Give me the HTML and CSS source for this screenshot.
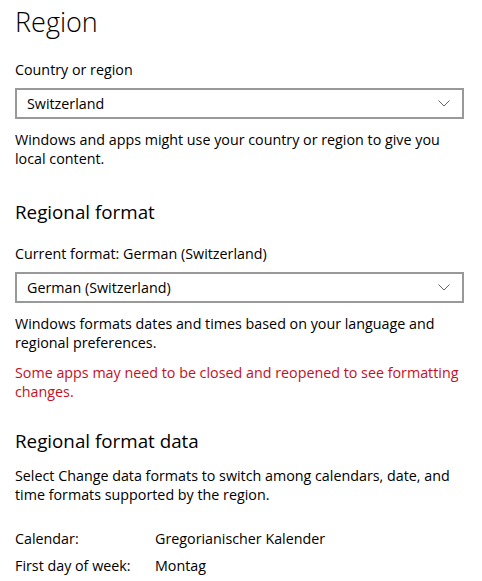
FILE: index.html
```html
<!DOCTYPE html>
<html>
<head>
<meta charset="utf-8">
<link rel="stylesheet" href="styles.css">
</head>
<body>
<main class="page">
  <h1 class="title">Region</h1>
  <section class="group first">
    <div class="label">Country or region</div>
    <div class="select"><span>Switzerland</span><svg class="chev" width="12" height="7" viewBox="0 0 12 7"><path d="M0.5 0.5 L6 6 L11.5 0.5" fill="none" stroke="#666" stroke-width="1"/></svg></div>
    <p class="text">Windows and apps might use your country or region to give you local content.</p>
  </section>
  <section class="group">
    <h2 class="heading h-format">Regional format</h2>
    <div class="label spaced">Current format: German (Switzerland)</div>
    <div class="select"><span>German (Switzerland)</span><svg class="chev" width="12" height="7" viewBox="0 0 12 7"><path d="M0.5 0.5 L6 6 L11.5 0.5" fill="none" stroke="#666" stroke-width="1"/></svg></div>
    <p class="text">Windows formats dates and times based on your language and regional preferences.</p>
    <p class="text warn">Some apps may need to be closed and reopened to see formatting changes.</p>
  </section>
  <section class="group">
    <h2 class="heading h-data">Regional format data</h2>
    <p class="text">Select Change data formats to switch among calendars, date, and time formats supported by the region.</p>
    <div class="data">
      <span>Calendar:</span><span>Gregorianischer Kalender</span>
      <span>First day of week:</span><span>Montag</span>
    </div>
  </section>
</main>
</body>
</html>
```
FILE: styles.css
```css
html, body { margin: 0; padding: 0; background: #fff; }
body { font-family: "Open Sans", "Noto Sans", sans-serif; color: #000; font-size: 14.3px; }
.page { padding: 0 18px 0 15px; }
.title { font-size: 27px; font-weight: 300; line-height: 40px; margin: 0; padding-top: 2px; }
.group.first { margin-top: 18px; }
.label { line-height: 20px; }
.label.spaced { margin-top: 18px; }
.select {
  margin-top: 8px; height: 27px; border: 2px solid #999; display: flex; align-items: center;
  justify-content: space-between; padding: 0 12px 0 10px; width: 423px;
}
.chev { display: block; }
.text { margin: 11px 0 0; line-height: 19px; }
.warn { color: #c50f1f; margin-top: 11px; }
.heading { font-size: 18.8px; font-weight: 400; margin: 0; line-height: 28px; }
.h-format { margin-top: 30px; }
.h-data { margin-top: 26px; }
.data { display: grid; grid-template-columns: 140px auto; row-gap: 8px; margin-top: 25px; line-height: 19px; }
```
